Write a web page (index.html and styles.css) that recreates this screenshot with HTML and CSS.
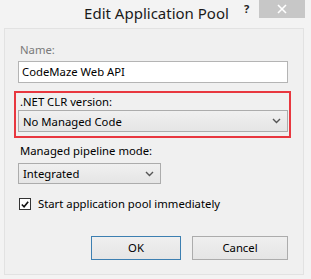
FILE: index.html
```html
<!DOCTYPE html>
<html>
<head>
<meta charset="utf-8">
<link rel="stylesheet" href="styles.css">
</head>
<body>
<div class="dialog">
  <div class="titlebar">
    <div class="title">Edit Application Pool</div>
    <div class="help">?</div>
    <div class="close">
      <svg width="10" height="10" viewBox="0 0 10 10"><path d="M1 1 L9 9 M9 1 L1 9" stroke="#fff" stroke-width="1.6"/></svg>
    </div>
  </div>
  <div class="panel">
    <div class="label disabled">Name:</div>
    <div class="textbox">CodeMaze Web API</div>
    <div class="highlight">
      <div class="label">.NET CLR version:</div>
      <div class="combo">
        <span>No Managed Code</span>
        <svg class="chev" width="9" height="6" viewBox="0 0 9 6"><path d="M1 1 L4.5 4.5 L8 1" fill="none" stroke="#555" stroke-width="1.4"/></svg>
      </div>
    </div>
    <div class="label pipeline">Managed pipeline mode:</div>
    <div class="combo small">
      <span>Integrated</span>
      <svg class="chev" width="9" height="6" viewBox="0 0 9 6"><path d="M1 1 L4.5 4.5 L8 1" fill="none" stroke="#555" stroke-width="1.4"/></svg>
    </div>
    <div class="check-row">
      <span class="checkbox">
        <svg width="11" height="11" viewBox="0 0 11 11"><path d="M2 5.5 L4.5 8 L9 2.5" fill="none" stroke="#111" stroke-width="1.8"/></svg>
      </span>
      <span>Start application pool immediately</span>
    </div>
    <div class="buttons">
      <div class="btn default">OK</div>
      <div class="btn">Cancel</div>
    </div>
  </div>
</div>
</body>
</html>
```
FILE: styles.css
```css
* { box-sizing: border-box; }
html, body { margin: 0; padding: 0; }
body {
  font-family: "Noto Sans", "Open Sans", sans-serif;
  font-size: 11.3px;
  color: #000;
  background: #f3f3f3;
}
.dialog {
  width: 311px;
  height: 279px;
  background: #f3f3f3;
  display: flex;
  flex-direction: column;
}
.titlebar {
  position: relative;
  height: 28px;
  flex: none;
}
.title {
  text-align: center;
  font-size: 15px;
  line-height: 26px;
  padding-left: 2px;
  color: #1a1a1a;
}
.help {
  position: absolute;
  left: 244px;
  top: 2px;
  font-weight: bold;
  font-size: 11px;
  line-height: 14px;
  color: #222;
}
.close {
  position: absolute;
  left: 259px;
  top: 0;
  width: 46px;
  height: 18px;
  background: #c7c7c7;
  display: flex;
  align-items: center;
  justify-content: center;
}
.panel {
  margin: 0 7px 4px 4px;
  flex: 1;
  background: #f0f0f0;
  border: 1px solid #e2e2e2;
  padding: 13px 15px 0 13px;
  display: flex;
  flex-direction: column;
}
.label {
  line-height: 16px;
  height: 16px;
  padding-left: 2px;
}
.disabled { color: #7a7a7a; }
.textbox {
  margin-top: 3px;
  height: 22px;
  border: 1px solid #b4b4b4;
  background: #fff;
  padding-left: 3px;
  line-height: 19px;
}
.highlight {
  margin: 8px -3px 0 -4px;
  border: 2px solid #e8373f;
  padding: 0 1px 4px 2px;
}
.highlight .label { margin-top: 0; height: 17px; line-height: 17px; }
.combo {
  height: 22px;
  border: 1px solid #acacac;
  background: linear-gradient(#f0f0f0, #e5e5e5);
  display: flex;
  align-items: center;
  justify-content: space-between;
  padding: 0 6px 0 4px;
}
.combo.small { width: 143px; }
.chev { flex: none; }
.pipeline { margin-top: 4px; height: 20px; line-height: 18px; }
.combo.small { margin-top: 1px; height: 21px; }
.check-row {
  margin-top: 12px;
  display: flex;
  align-items: center;
  gap: 7px;
  line-height: 16px;
}
.checkbox {
  width: 12px;
  height: 12px;
  border: 1px solid #333;
  background: #fff;
  display: flex;
  align-items: center;
  justify-content: center;
  margin-left: 1px;
}
.buttons {
  margin-top: 24px;
  display: flex;
  justify-content: flex-end;
  gap: 11px;
}
.btn {
  height: 24px;
  border: 1px solid #acacac;
  background: linear-gradient(#efefef, #e5e5e5);
  text-align: center;
  line-height: 22px;
  width: 96px;
}
.btn.default {
  width: 90px;
  border-color: #3c7fb1;
}
```
